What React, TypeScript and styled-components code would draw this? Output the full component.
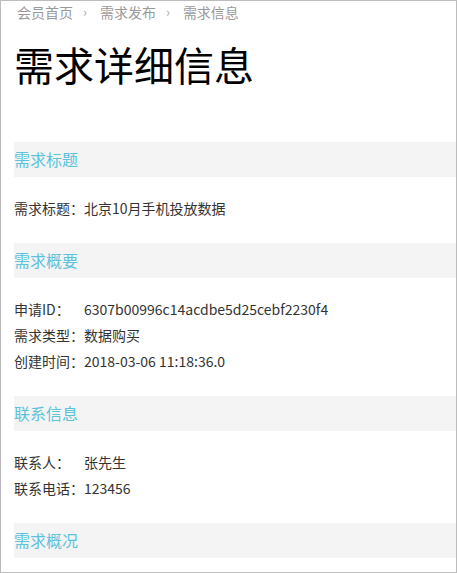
import React from 'react';
import styled, { createGlobalStyle } from 'styled-components';

const GlobalStyle = createGlobalStyle`
  html, body {
    margin: 0;
    padding: 0;
    background: #fff;
  }
  body {
    font-family: "Noto Sans CJK SC", "Noto Sans", sans-serif;
    color: #333;
  }
`;

const Page = styled.div`
  box-sizing: border-box;
  width: 457px;
  height: 573px;
  border: 1px solid #bcbcbc;
  padding-left: 13px;
  overflow: hidden;
  background: #fff;
`;

const Crumbs = styled.div`
  display: flex;
  align-items: center;
  margin-top: 1px;
  padding-left: 3px;
  height: 20px;
  font-size: 14px;
  line-height: 20px;
  color: #999;
`;

const Sep = styled.span`
  margin: 0 13px 0 10px;
  color: #aaa;
  font-size: 13px;
`;

const Title = styled.h1`
  margin: 20px 0 56px;
  font-size: 40px;
  line-height: 44px;
  font-weight: normal;
  color: #000;
`;

const SectionHead = styled.div`
  height: 35px;
  line-height: 35px;
  font-size: 16px;
  color: #5bc3dc;
  background: #f4f4f4;
`;

const SectionBody = styled.div`
  padding: 18px 0 22px;
  font-size: 14px;
  line-height: 26px;
  color: #333;
`;

const Row = styled.div`
  display: flex;
  white-space: nowrap;
`;

const Label = styled.span`
  display: inline-block;
  width: 70px;
`;

type Field = { label: string; value: string };

const sections: { title: string; fields: Field[] }[] = [
  { title: '需求标题', fields: [{ label: '需求标题：', value: '北京10月手机投放数据' }] },
  {
    title: '需求概要',
    fields: [
      { label: '申请ID：', value: '6307b00996c14acdbe5d25cebf2230f4' },
      { label: '需求类型：', value: '数据购买' },
      { label: '创建时间：', value: '2018-03-06 11:18:36.0' },
    ],
  },
  {
    title: '联系信息',
    fields: [
      { label: '联系人：', value: '张先生' },
      { label: '联系电话：', value: '123456' },
    ],
  },
  { title: '需求概况', fields: [] },
];

const App: React.FunctionComponent<{}> = () => {
  const crumbs = ['会员首页', '需求发布', '需求信息'];
  return (
    <React.Fragment>
      <GlobalStyle />
      <Page>
        <Crumbs>
          {crumbs.map((c, i) => (
            <React.Fragment key={c}>
              {i > 0 && <Sep>›</Sep>}
              <span>{c}</span>
            </React.Fragment>
          ))}
        </Crumbs>
        <Title>需求详细信息</Title>
        {sections.map((s) => (
          <section key={s.title}>
            <SectionHead>{s.title}</SectionHead>
            {s.fields.length > 0 && (
              <SectionBody>
                {s.fields.map((f) => (
                  <Row key={f.label}>
                    <Label>{f.label}</Label>
                    <span>{f.value}</span>
                  </Row>
                ))}
              </SectionBody>
            )}
          </section>
        ))}
      </Page>
    </React.Fragment>
  );
};

export default App;
